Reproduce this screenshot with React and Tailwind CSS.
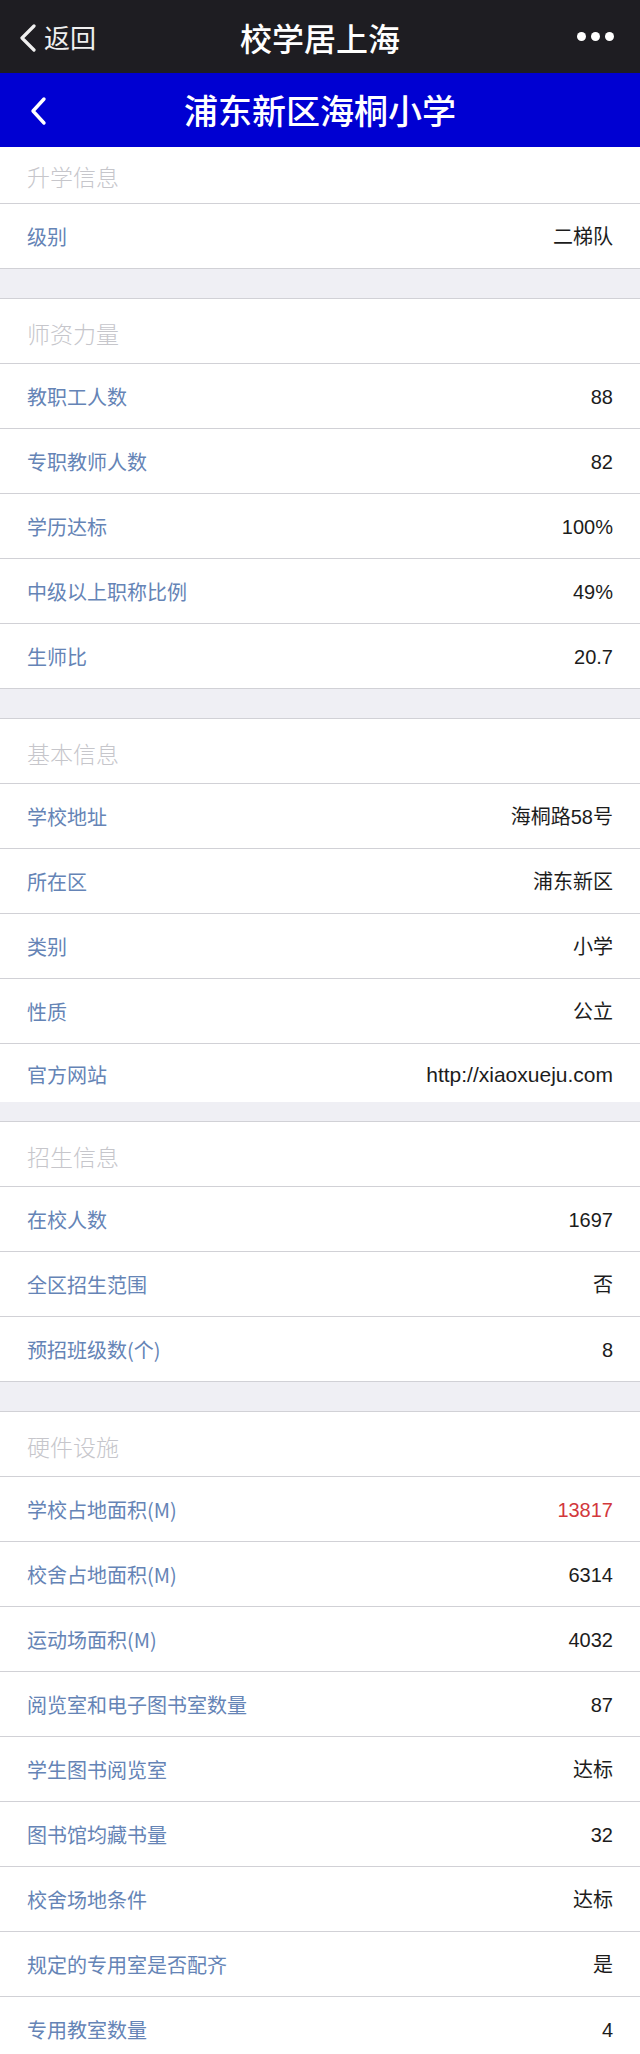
import React from "react";

const sections = [
  { title: "升学信息", first: true, rows: [["级别", "二梯队"]] },
  {
    title: "师资力量",
    rows: [
      ["教职工人数", "88"],
      ["专职教师人数", "82"],
      ["学历达标", "100%"],
      ["中级以上职称比例", "49%"],
      ["生师比", "20.7"],
    ],
  },
  {
    title: "基本信息",
    short: true,
    rows: [
      ["学校地址", "海桐路58号"],
      ["所在区", "浦东新区"],
      ["类别", "小学"],
      ["性质", "公立"],
      ["官方网站", "http://xiaoxueju.com", false, true],
    ],
  },
  {
    title: "招生信息",
    rows: [
      ["在校人数", "1697"],
      ["全区招生范围", "否"],
      ["预招班级数(个)", "8"],
    ],
  },
  {
    title: "硬件设施",
    last: true,
    rows: [
      ["学校占地面积(M)", "13817", true],
      ["校舍占地面积(M)", "6314"],
      ["运动场面积(M)", "4032"],
      ["阅览室和电子图书室数量", "87"],
      ["学生图书阅览室", "达标"],
      ["图书馆均藏书量", "32"],
      ["校舍场地条件", "达标"],
      ["规定的专用室是否配齐", "是"],
      ["专用教室数量", "4"],
    ],
  },
];

const cjk = { fontFamily: '"Noto Sans CJK SC", "Noto Sans", sans-serif' };
const val = { fontFamily: '"Liberation Sans", "Noto Sans CJK SC", sans-serif' };

function Row({ label, value, red, wide, isLastShort }) {
  return (
    <div
      className={
        "flex items-center justify-between bg-white px-[27px] box-border " +
        (isLastShort ? "h-[58px] pt-[4px]" : "h-[65px] border-b border-[#d1d1d6] pt-[2px]")
      }
    >
      <span className="text-[20px] text-[#6584b6]" style={cjk}>
        {label}
      </span>
      <span
        className={
          (wide ? "text-[21px] " : "text-[20px] ") +
          (red ? "text-[#d2383c]" : "text-[#1c1c1c]")
        }
        style={val}
      >
        {value}
      </span>
    </div>
  );
}

export default function App() {
  return (
    <div className="w-[640px] h-[2054px] overflow-hidden bg-white" style={cjk}>
      <div className="h-[73px] bg-[#1e1d22] flex items-center justify-between px-[18px] relative">
        <div className="flex items-center gap-[6px] text-[#f0f0f0]">
          <svg width="20" height="28" viewBox="0 0 20 28" className="mt-[2px]">
            <path d="M16 2 L4 14 L16 26" fill="none" stroke="#f0f0f0" strokeWidth="3.2" strokeLinecap="round" strokeLinejoin="round" />
          </svg>
          <span className="text-[26px] leading-none">返回</span>
        </div>
        <div className="absolute left-0 right-0 top-0 h-[73px] flex items-center justify-center pointer-events-none">
          <span className="text-[32px] font-medium text-white leading-none">校学居上海</span>
        </div>
        <div className="flex items-center gap-[5px] pr-[8px]">
          <span className="w-[9px] h-[9px] rounded-full bg-white" />
          <span className="w-[9px] h-[9px] rounded-full bg-white" />
          <span className="w-[9px] h-[9px] rounded-full bg-white" />
        </div>
      </div>
      <div className="h-[74px] bg-[#0000d2] flex items-center relative">
        <svg width="20" height="30" viewBox="0 0 20 30" className="ml-[28px] mt-[2px]">
          <path d="M16 3 L5 15 L16 27" fill="none" stroke="#ffffff" strokeWidth="3.4" strokeLinecap="round" strokeLinejoin="round" />
        </svg>
        <div className="absolute inset-0 flex items-center justify-center">
          <span className="text-[34px] font-medium text-white leading-none">浦东新区海桐小学</span>
        </div>
      </div>
      {sections.map((s, i) => (
        <div key={i}>
          <div
            className={
              "flex items-center bg-white px-[27px] border-b border-[#d1d1d6] box-border " +
              (s.first ? "h-[57px] pt-[2px]" : "h-[65px] pt-[4px]")
            }
          >
            <span className="text-[23px] text-[#c6c6cb] font-light">{s.title}</span>
          </div>
          {s.rows.map((r, j) => (
            <Row
              key={j}
              label={r[0]}
              value={r[1]}
              red={r[2]}
              wide={r[3]}
              isLastShort={s.short && j === s.rows.length - 1}
            />
          ))}
          {!s.last && (
            <div
              className={
                "bg-[#efeff4] border-b border-[#d1d1d6] box-border " +
                (s.short ? "h-[20px]" : "h-[30px]")
              }
            />
          )}
        </div>
      ))}
    </div>
  );
}
